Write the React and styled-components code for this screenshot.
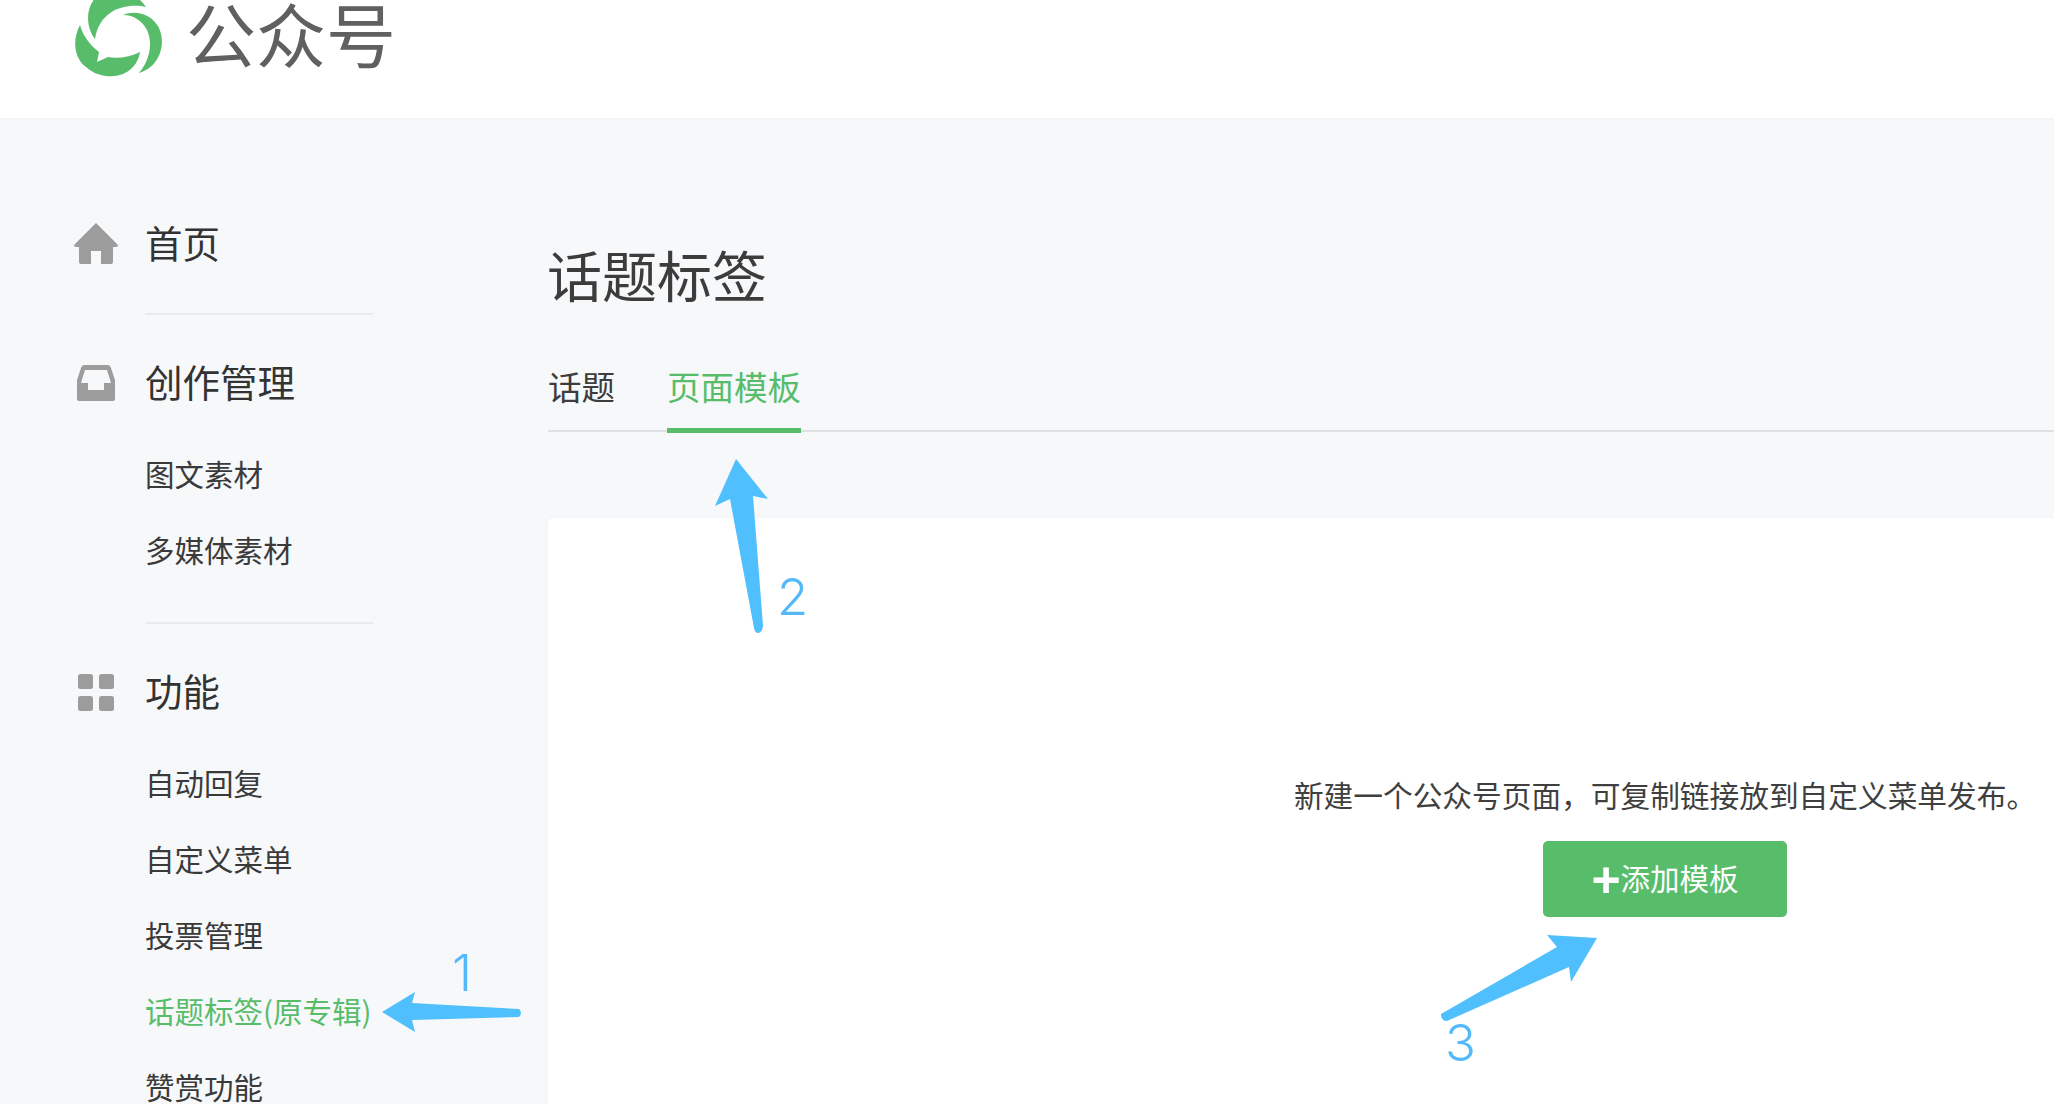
import styled, { createGlobalStyle } from "styled-components";

const GREEN = "#58bd6a";
const ARROW = "#4fc0fd";

const GlobalStyle = createGlobalStyle`
    html, body {
        margin: 0;
        padding: 0;
        background: #f7f8fa;
    }

    * {
        box-sizing: border-box;
    }

    body {
        font-family: "Noto Sans CJK SC", "Liberation Sans", sans-serif;
        color: #353535;
    }
`;

const Page = styled.div`
    position: relative;
    width: 2054px;
    height: 1104px;
    overflow: hidden;
    background: #f7f8fa;
`;

const Header = styled.header`
    display: flex;
    align-items: flex-start;
    height: 118px;
    padding-left: 75px;
    overflow: hidden;
    background: #fff;
    box-shadow: 0 1px 3px rgba(0 0 0 / 4%);
`;

const Logo = styled.svg`
    flex: none;
    width: 88px;
    height: 88px;
    margin-top: -11px;
`;

const Brand = styled.span`
    margin-left: 23px;
    font-size: 70px;
    line-height: 66px;
    color: #606060;
`;

const Body = styled.div`
    display: flex;
`;

const Sidebar = styled.nav`
    flex: none;
    width: 548px;
    padding: 90px 0 0 75px;
`;

const Heading = styled.div`
    display: flex;
    align-items: center;
    height: 72px;
    font-size: 37.5px;
    color: #333;
`;

const HeadingLabel = styled.span`
    margin: 0 0 5px -1px;
`;

const IconSlot = styled.span`
    display: flex;
    justify-content: center;
    flex: none;
    width: 44px;
    margin: 0 28px 0 -1px;
`;

const SubList = styled.ul`
    margin: 18px 0 0;
    padding: 0 0 0 70px;
    list-style: none;
`;

const SubItem = styled.li`
    height: 76px;
    font-size: 29.5px;
    line-height: 72px;
    white-space: nowrap;
    color: ${(props) => (props.$active ? GREEN : "#3a3a3a")};
`;

const Divider = styled.hr`
    width: 228px;
    height: 2px;
    margin: 33px 0 32px 70px;
    border: 0;
    background: #e9eaec;
`;

const Main = styled.main`
    flex: none;
    width: 1506px;
    padding-top: 118px;
`;

const Title = styled.h1`
    margin: 0 0 36px -1px;
    font-size: 55px;
    font-weight: 400;
    line-height: 74px;
    color: #3c3c3c;
`;

const Tabs = styled.div`
    display: flex;
    gap: 52px;
    height: 86px;
    border-bottom: 2px solid #e0e1e5;
`;

const Tab = styled.div`
    position: relative;
    height: 84px;
    font-size: 33.5px;
    line-height: 80px;
    color: ${(props) => (props.$active ? GREEN : "#3d3d3d")};

    &::after {
        content: "";
        display: ${(props) => (props.$active ? "block" : "none")};
        position: absolute;
        left: 0;
        right: 0;
        bottom: -3px;
        height: 5px;
        background: ${GREEN};
    }
`;

const Card = styled.section`
    display: flex;
    flex-direction: column;
    align-items: center;
    width: 2234px;
    height: 640px;
    margin-top: 86px;
    padding-top: 257px;
    border-radius: 5px;
    background: #fff;
    box-shadow: 0 0 6px rgba(0 0 0 / 3%);
`;

const Hint = styled.p`
    height: 44px;
    margin: 0;
    font-size: 29.7px;
    line-height: 40px;
    white-space: nowrap;
    color: #3f3f3f;
`;

const AddButton = styled.button`
    display: flex;
    align-items: center;
    justify-content: center;
    width: 244px;
    height: 76px;
    margin-top: 22px;
    padding: 0 0 4px;
    border: 0;
    border-radius: 5px;
    background: ${GREEN};
    font-family: inherit;
    font-size: 29.5px;
    color: #fff;
`;

const PlusSign = styled.span`
    margin: 6px 0 0;
    font-family: "Liberation Sans", sans-serif;
    font-size: 50px;
    font-weight: 700;
    line-height: 0;
`;

const Overlay = styled.svg`
    position: absolute;
    top: 0;
    left: 0;
    width: 2054px;
    height: 1104px;
    pointer-events: none;
`;

const StepNumber = styled.span`
    position: absolute;
    left: ${(props) => props.$x}px;
    top: ${(props) => props.$y}px;
    font-family: Inter, "Liberation Sans", sans-serif;
    font-size: 51px;
    font-weight: 300;
    line-height: 50px;
    color: #53b9fb;
`;

const HomeIcon = () => (
    <svg width="44" height="42" viewBox="0 0 44 42" fill="#9c9c9c">
        <path d="M22 0 L44 22 Q44 24 42 24 H39 V39 Q39 41 37 41 H27 V28 H17 V41 H7 Q5 41 5 39 V24 H2 Q0 24 0 22 Z" />
    </svg>
);

const InboxIcon = () => (
    <svg width="38" height="36" viewBox="0 0 38 36" fill="#9c9c9c">
        <path
            fillRule="evenodd"
            d="M7 0 H31 Q33 0 34 3 L38 15 V34 Q38 36 36 36 H2 Q0 36 0 34 V15 L4 3 Q5 0 7 0 Z M8 5 L4 18 H11 V25 H27 V18 H34 L30 5 Z"
        />
    </svg>
);

const GridIcon = () => (
    <svg width="36" height="37" viewBox="0 0 36 37" fill="#9c9c9c">
        <rect x="0" y="0" width="15" height="15" rx="2.5" />
        <rect x="21" y="0" width="15" height="15" rx="2.5" />
        <rect x="0" y="22" width="15" height="15" rx="2.5" />
        <rect x="21" y="22" width="15" height="15" rx="2.5" />
    </svg>
);

const App = () => {
    return (
        <Page>
            <GlobalStyle />
            <Header>
                <Logo viewBox="75 -11 88 88" fill={GREEN}>
                    <path d="M95 39 C85 26 85 4 100 -6 C116 -16 136 -8 146 7 C128 3 100 8 95 39 Z" />
                    <path d="M123 15 C136 9 153 15 159 28 C167 46 158 68 139 73 C150 60 153 43 147 30 C142 21 134 15 123 15 Z" />
                    <path d="M80 25 C72 40 74 58 86 67 C96 76 108 77 114 76 C128 75 138 65 140 52 C130 57 118 59 108 57 L97 62 L99 52 C90 45 83 36 80 25 Z" />
                </Logo>
                <Brand>公众号</Brand>
            </Header>
            <Body>
                <Sidebar>
                    <Heading>
                        <IconSlot>
                            <HomeIcon />
                        </IconSlot>
                        <HeadingLabel>首页</HeadingLabel>
                    </Heading>
                    <Divider />
                    <Heading>
                        <IconSlot>
                            <InboxIcon />
                        </IconSlot>
                        <HeadingLabel>创作管理</HeadingLabel>
                    </Heading>
                    <SubList>
                        <SubItem>图文素材</SubItem>
                        <SubItem>多媒体素材</SubItem>
                    </SubList>
                    <Divider />
                    <Heading>
                        <IconSlot>
                            <GridIcon />
                        </IconSlot>
                        <HeadingLabel>功能</HeadingLabel>
                    </Heading>
                    <SubList>
                        <SubItem>自动回复</SubItem>
                        <SubItem>自定义菜单</SubItem>
                        <SubItem>投票管理</SubItem>
                        <SubItem $active>话题标签(原专辑)</SubItem>
                        <SubItem>赞赏功能</SubItem>
                    </SubList>
                </Sidebar>
                <Main>
                    <Title>话题标签</Title>
                    <Tabs>
                        <Tab>话题</Tab>
                        <Tab $active>页面模板</Tab>
                    </Tabs>
                    <Card>
                        <Hint>新建一个公众号页面，可复制链接放到自定义菜单发布。</Hint>
                        <AddButton>
                            <PlusSign>+</PlusSign>添加模板
                        </AddButton>
                    </Card>
                </Main>
            </Body>

            {/* 캡처 위에 그려진 화살표 */}
            <Overlay viewBox="0 0 2054 1104" fill={ARROW}>
                <path d="M382 1012 L415 992 L412 1003 L519 1009 Q523 1013 519 1017 L412 1020 L415 1032 Z" />
                <path d="M736 459 L768 499 L753 496 L763 626 Q762 633 758 633 Q755 633 754 628 L730 499 L715 506 Z" />
                <path d="M1597 938 L1571 982 L1569 967 L1447 1021 Q1441 1021 1441 1014 L1557 947 L1547 935 Z" />
            </Overlay>
            <StepNumber $x={452} $y={948}>1</StepNumber>
            <StepNumber $x={777} $y={572}>2</StepNumber>
            <StepNumber $x={1445} $y={1018}>3</StepNumber>
        </Page>
    );
};

export default App;
